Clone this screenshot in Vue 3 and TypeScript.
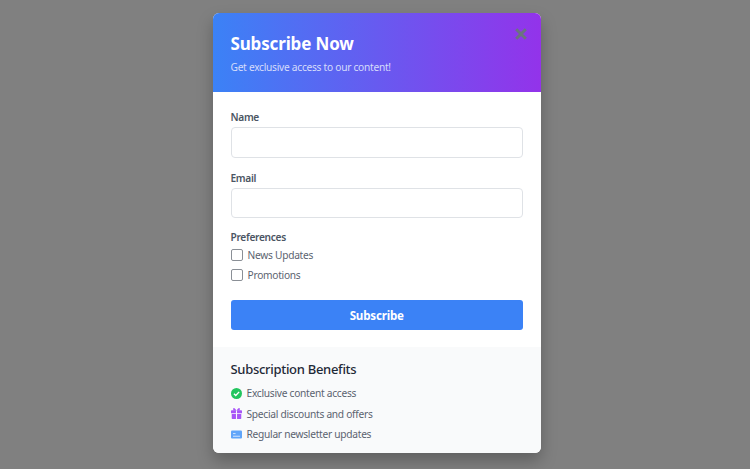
<script setup lang="ts">
const benefits = [
  { text: 'Exclusive content access', icon: 'check' },
  { text: 'Special discounts and offers', icon: 'gift' },
  { text: 'Regular newsletter updates', icon: 'news' },
]
</script>

<template>
  <div class="overlay">
    <div class="modal">
      <header class="head">
        <h1>Subscribe Now</h1>
        <p>Get exclusive access to our content!</p>
        <span class="close">
          <svg width="12" height="12" viewBox="0 0 12 12"><path d="M1.2 1.2 10.8 10.8M10.8 1.2 1.2 10.8" stroke="#6b7280" stroke-width="3" fill="none"/></svg>
        </span>
      </header>
      <form class="form" @submit.prevent>
        <div class="field">
          <label>Name</label>
          <input type="text" />
        </div>
        <div class="field">
          <label>Email</label>
          <input type="email" />
        </div>
        <div class="prefs">
          <div class="label">Preferences</div>
          <div class="check"><span class="box"></span>News Updates</div>
          <div class="check"><span class="box"></span>Promotions</div>
        </div>
        <button type="submit">Subscribe</button>
      </form>
      <section class="benefits">
        <h2>Subscription Benefits</h2>
        <ul>
          <li v-for="b in benefits" :key="b.text">
            <svg v-if="b.icon === 'check'" width="11" height="11" viewBox="0 0 12 12"><circle cx="6" cy="6" r="6" fill="#22c55e"/><path d="M3.2 6.2 5.2 8.1 8.9 4.2" stroke="#fff" stroke-width="1.5" fill="none"/></svg>
            <svg v-else-if="b.icon === 'gift'" width="11" height="11" viewBox="0 0 12 12"><path d="M0 3.2a.8.8 0 0 1 .8-.8h4.6v3.2H0zM6.6 2.4h4.6a.8.8 0 0 1 .8.8v2.4H6.6zM.8 6.6h4.6V12H1.6a.8.8 0 0 1-.8-.8zM6.6 6.6h4.6v4.6a.8.8 0 0 1-.8.8H6.6z" fill="#a855f7"/><path d="M6 2.6 4 .4H2.2L2.6 2.6zM6 2.6 8 .4h1.8L9.4 2.6z" fill="#a855f7"/></svg>
            <svg v-else width="11" height="11" viewBox="0 0 12 12"><rect x="0" y="1.6" width="12" height="8.8" rx="1.2" fill="#60a5fa"/><path d="M2.2 7.9h7.6M2.2 5h2.8" stroke="#dbeafe" stroke-width="1"/></svg>
            <span>{{ b.text }}</span>
          </li>
        </ul>
      </section>
    </div>
  </div>
</template>

<style>
html, body { margin: 0; padding: 0; }
</style>

<style scoped>
.overlay {
  width: 750px;
  height: 469px;
  background: #808080;
  display: flex;
  justify-content: center;
  align-items: flex-start;
  box-sizing: border-box;
  padding: 13px 0 0 4px;
  font-family: "Noto Sans", "Open Sans", sans-serif;
  overflow: hidden;
}
.modal {
  width: 328px;
  height: 440px;
  background: #fff;
  border-radius: 6px;
  overflow: hidden;
  box-shadow: 0 8px 16px rgba(0, 0, 0, .25);
  display: flex;
  flex-direction: column;
}
.head {
  position: relative;
  height: 79px;
  box-sizing: border-box;
  padding: 18px 18px 0 17.5px;
  background: linear-gradient(90deg, #3b82f6, #9333ea);
  color: #fff;
}
.head h1 { margin: 0; font-size: 17px; line-height: 26px; font-weight: 700; letter-spacing: -.15px; }
.head p { margin: 3px 0 0; font-size: 10.2px; line-height: 15px; color: #d5dcfb; letter-spacing: -.27px; }
.close { position: absolute; top: 15px; right: 14px; width: 12px; height: 12px; display: flex; }
.form { padding: 18px 18px 0 17.5px; display: flex; flex-direction: column; }
.field { display: flex; flex-direction: column; margin-bottom: 12px; }
.field:first-child { margin-bottom: 13px; }
label, .label { font-size: 10.2px; line-height: 15px; font-weight: 600; color: #4b5563; letter-spacing: -.33px; }
.field label { margin-bottom: 2px; }
input {
  height: 30.5px;
  box-sizing: border-box;
  border: 1px solid #dfe2e6;
  border-radius: 4px;
  background: #fff;
  padding: 0 9px;
  outline: none;
}
.prefs { display: flex; flex-direction: column; }
.check {
  display: flex;
  align-items: center;
  gap: 5px;
  height: 20px;
  font-size: 10.2px;
  color: #5b6370;
  letter-spacing: -.27px;
}
.box {
  width: 12px;
  height: 12px;
  box-sizing: border-box;
  border: 1px solid #8a8f96;
  border-radius: 2px;
  background: #fff;
}
button {
  margin-top: 15px;
  height: 30px;
  border: 0;
  border-radius: 3px;
  background: #3b82f6;
  color: #fff;
  font: 700 11.6px "Noto Sans", "Open Sans", sans-serif;
  letter-spacing: -.2px;
}
.benefits {
  margin-top: 17px;
  flex: 1;
  background: #f9fafb;
  padding: 12px 18px 0 17.5px;
}
.benefits h2 { margin: 0; font-size: 13px; line-height: 20px; font-weight: 500; color: #1f2937; letter-spacing: -.3px; }
ul { list-style: none; margin: 4px 0 0; padding: 0; }
li {
  display: flex;
  align-items: center;
  gap: 5px;
  height: 20.5px;
  font-size: 10.2px;
  color: #5b6370;
  letter-spacing: -.27px;
}
</style>
